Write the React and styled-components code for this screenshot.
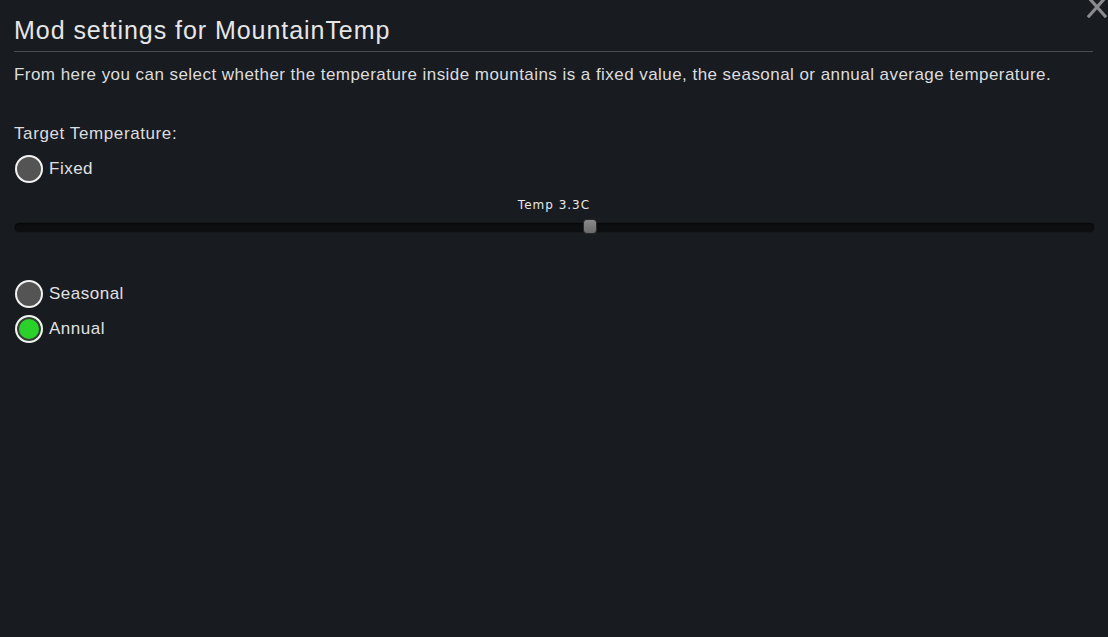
import React from 'react';
import styled, { createGlobalStyle } from 'styled-components';

const GlobalStyle = createGlobalStyle`
    html, body {
        margin: 0;
        padding: 0;
        background: #181b20;
    }
    body {
        font-family: "Liberation Sans", Arial, sans-serif;
        color: #e2e2e2;
    }
`;

const options = [
    { key: 'fixed', label: 'Fixed' },
    { key: 'seasonal', label: 'Seasonal' },
    { key: 'annual', label: 'Annual' },
];

const Radio = ({ label, checked }) => (
    <RadioRow>
        <Circle $checked={checked} />
        <RadioLabel>{label}</RadioLabel>
    </RadioRow>
);

const App = () => {
    const selected = 'annual';
    const pct = 53.3;

    return (
        <>
            <GlobalStyle />
            <Window>
                <CloseButton aria-label="close">
                    <svg width="22" height="18" viewBox="0 0 22 18">
                        <path d="M3 -2 L19 16 M19 -2 L3 16" stroke="#8a8b8d" strokeWidth="3.2" strokeLinecap="square" />
                    </svg>
                </CloseButton>
                <Title>Mod settings for MountainTemp</Title>
                <Description>
                    From here you can select whether the temperature inside mountains is a fixed value, the seasonal or annual average temperature.
                </Description>

                <SectionLabel>Target Temperature:</SectionLabel>
                <RadioGroup $gap={7}>
                    <Radio label={options[0].label} checked={selected === 'fixed'} />
                </RadioGroup>

                <SliderBlock>
                    <SliderValue>Temp 3.3C</SliderValue>
                    <Track>
                        <Thumb style={{ left: `${pct}%` }} />
                    </Track>
                </SliderBlock>

                <RadioGroup $gap={44}>
                    {options.slice(1).map((o) => (
                        <Radio key={o.key} label={o.label} checked={selected === o.key} />
                    ))}
                </RadioGroup>
            </Window>
        </>
    );
};

export default App;

const Window = styled.div`
    position: relative;
    width: 1108px;
    height: 637px;
    box-sizing: border-box;
    padding: 15px 14px 0 14px;
    display: flex;
    flex-direction: column;
    background: #181b20;
    overflow: hidden;
`;

const CloseButton = styled.div`
    position: absolute;
    top: 0;
    right: 0;
    width: 22px;
    height: 18px;
    cursor: pointer;
`;

const Title = styled.h1`
    margin: 0;
    font-size: 25px;
    font-weight: 400;
    letter-spacing: 0.95px;
    line-height: 30px;
    color: #e6e6e6;
    padding-bottom: 6px;
    width: 1079px;
    border-bottom: 1px solid #4a4c50;
`;

const Description = styled.p`
    margin: 13px 0 0 0;
    font-size: 17px;
    letter-spacing: 0.45px;
    line-height: 20px;
    color: #dddddd;
`;

const SectionLabel = styled.div`
    margin-top: 39px;
    font-size: 17px;
    letter-spacing: 0.6px;
    line-height: 20px;
    color: #dddddd;
`;

const RadioGroup = styled.div`
    display: flex;
    flex-direction: column;
    margin-top: ${({ $gap }) => $gap}px;
`;

const RadioRow = styled.div`
    display: flex;
    align-items: center;
    gap: 6px;
    height: 35px;
    margin-left: 1px;
`;

const Circle = styled.span`
    width: 28px;
    height: 28px;
    border-radius: 50%;
    border: 2px solid #f2f2f2;
    box-sizing: border-box;
    background: ${({ $checked }) => ($checked ? '#2ad12a' : '#545454')};
    box-shadow: ${({ $checked }) => ($checked ? 'inset 0 0 0 2px #3b3b3b' : 'none')};
`;

const RadioLabel = styled.span`
    font-size: 17px;
    letter-spacing: 0.5px;
    color: #e0e0e0;
`;

const SliderBlock = styled.div`
    display: flex;
    flex-direction: column;
    align-items: center;
    margin-top: 12px;
    width: 1080px;
`;

const SliderValue = styled.div`
    font-family: "DejaVu Sans", sans-serif;
    font-size: 12px;
    letter-spacing: 1px;
    line-height: 14px;
    color: #e8e8e8;
`;

const Track = styled.div`
    position: relative;
    margin-top: 11px;
    width: 1079px;
    height: 9px;
    border-radius: 4.5px;
    background: #0c0e10;
    box-shadow: inset 0 1px 1px #070809, 0 0 0 1px #15171b;
`;

const Thumb = styled.div`
    position: absolute;
    top: -3px;
    width: 12px;
    height: 13px;
    margin-left: -6px;
    border-radius: 3px;
    background: linear-gradient(#8a8a8a, #6a6a6a);
    box-shadow: 0 0 0 1px #2a2a2a;
`;
